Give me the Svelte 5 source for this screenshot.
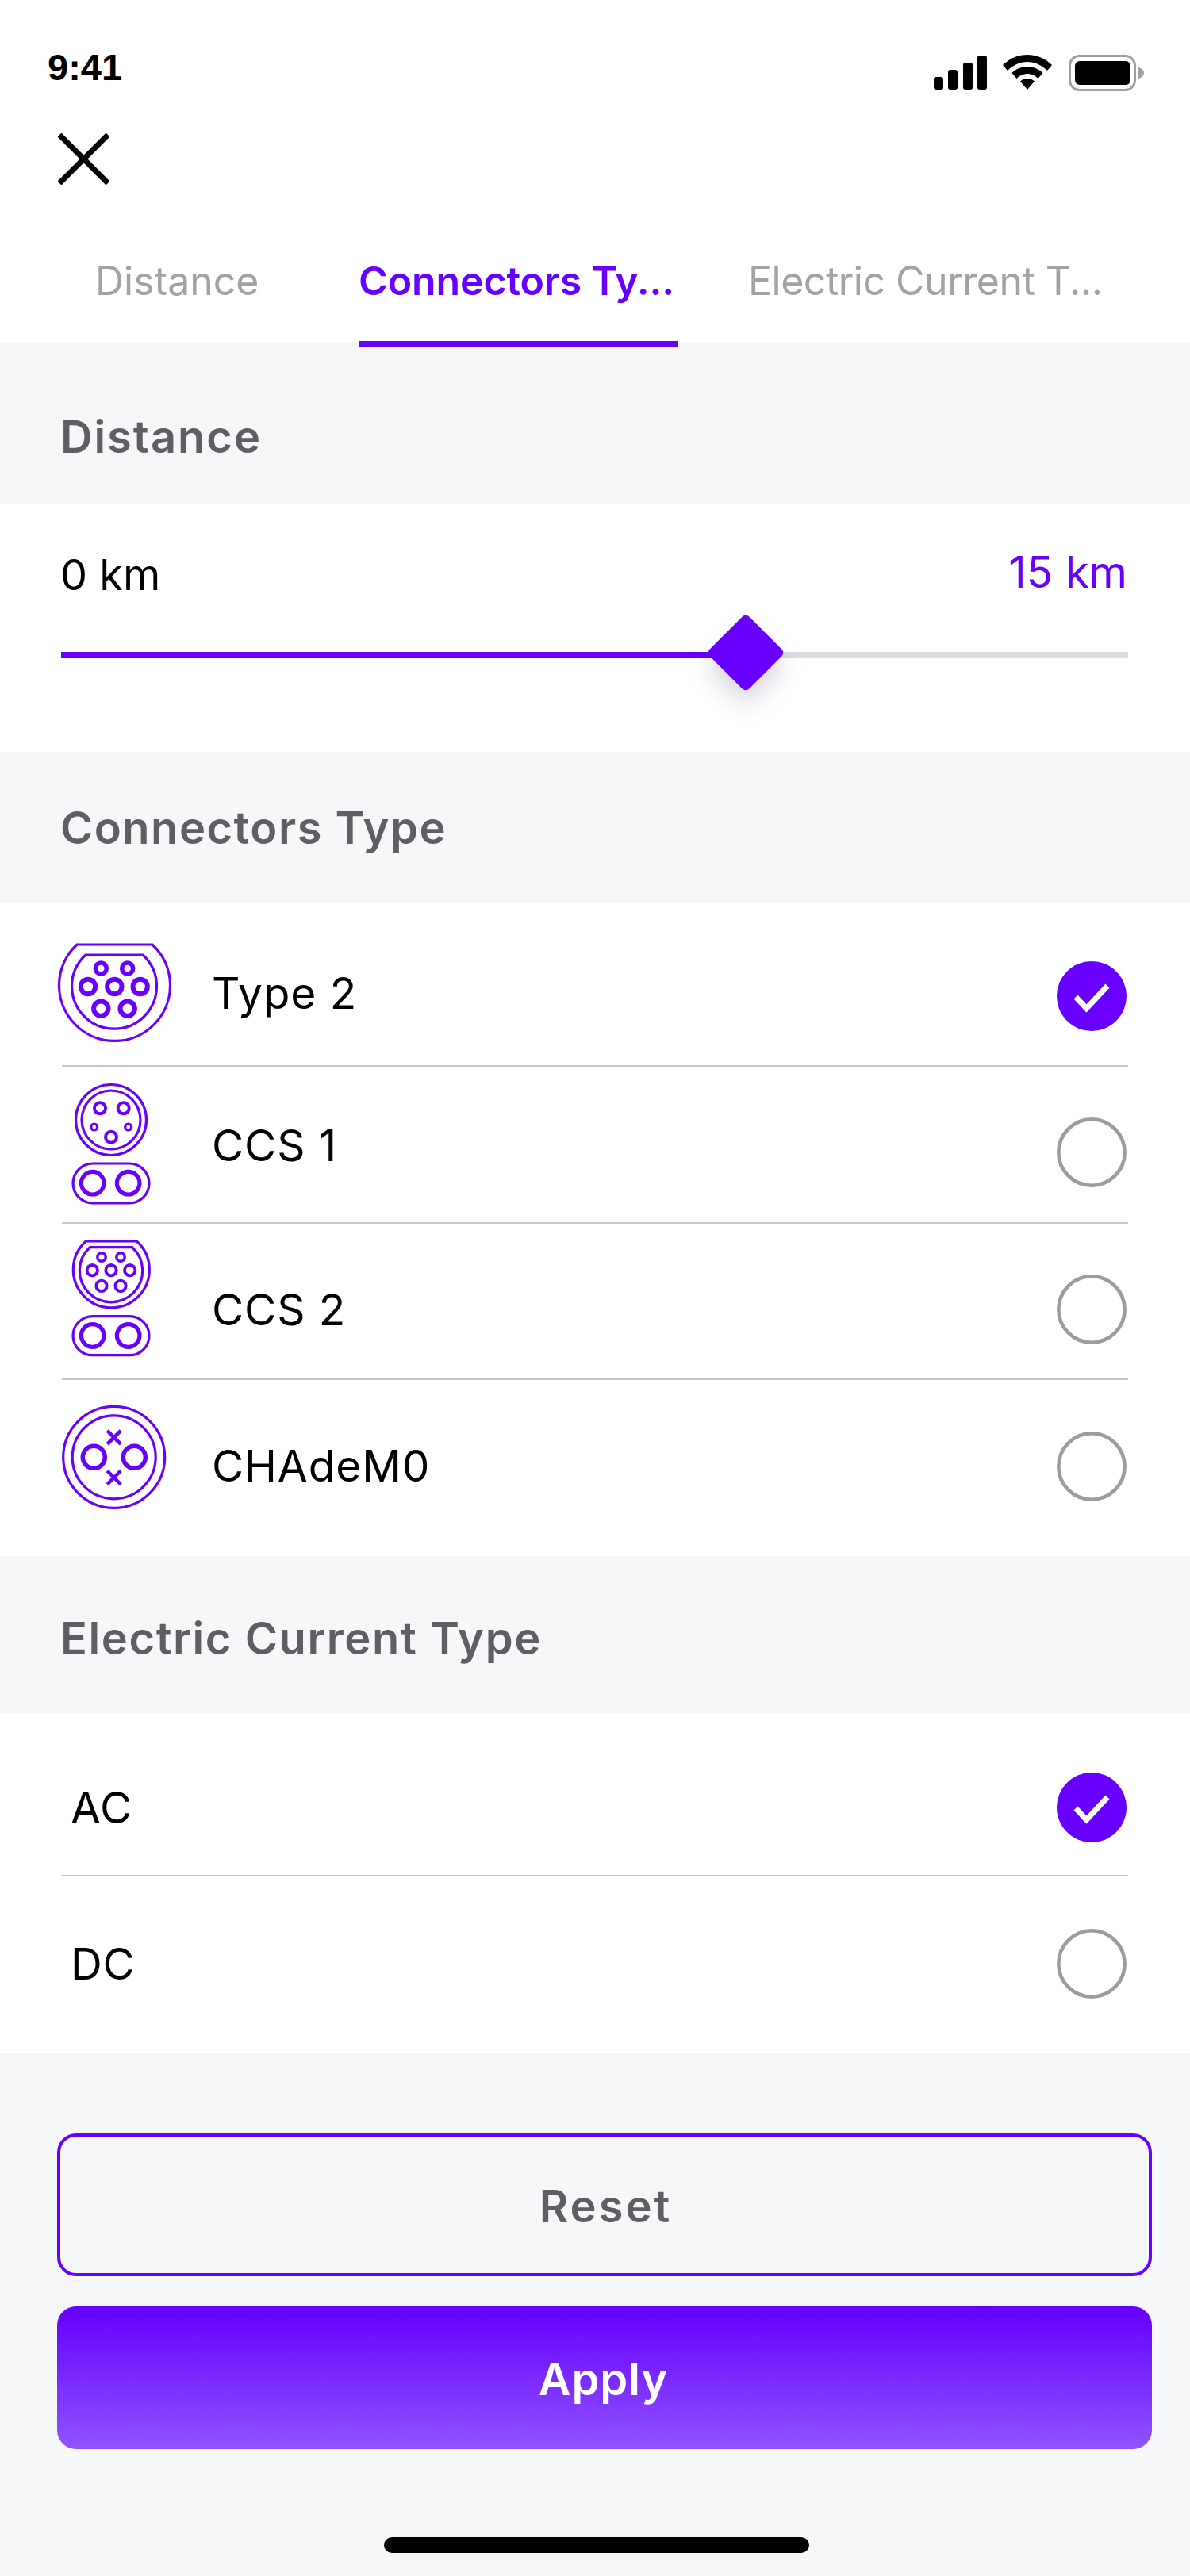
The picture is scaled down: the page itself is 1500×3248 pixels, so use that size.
<script>
  const P = '#6800ff';
</script>

{#snippet radio(on)}
  <svg class="radio" viewBox="0 0 88 88">
    {#if on}
      <circle cx="44" cy="44" r="44" fill={P} />
      <path d="M24 45 L37.500 59.500 L64 31" fill="none" stroke="#fff" stroke-width="7" />
    {:else}
      <circle cx="44" cy="44" r="41.700" fill="none" stroke="#9c9c9c" stroke-width="4.600" />
    {/if}
  </svg>
{/snippet}

<div class="page">
  <header class="top">
    <div class="status">
      <span class="time">9:41</span>
      <div class="sys">
        <svg class="signal" viewBox="0 0 67 43"><rect x="0" y="27" width="12" height="16" rx="3"/><rect x="18" y="18" width="12" height="25" rx="3"/><rect x="37" y="9" width="12" height="34" rx="3"/><rect x="55" y="0" width="12" height="43" rx="3"/></svg>
        <svg class="wifi" viewBox="0 0 62 44"><path d="M31 0C43 0 54 5 62 13L56 20C49.500 13.500 40.500 9 31 9S12.500 13.500 6 20L0 13C8 5 19 0 31 0Z"/><path d="M31 15C38.500 15 45.500 18 50.500 23L44.500 30C41 26.500 36 24 31 24S21 26.500 17.500 30L11.500 23C16.500 18 23.500 15 31 15Z"/><path d="M31 30C34.500 30 37.500 31.500 40 33.500L31 44L22 33.500C24.500 31.500 27.500 30 31 30Z"/></svg>
        <svg class="battery" viewBox="0 0 96 46"><rect x="1.500" y="1.500" width="82" height="43" rx="12" fill="none" stroke="#a0a0a0" stroke-width="3"/><rect x="8" y="8" width="70" height="30" rx="6" fill="#000"/><path d="M88 16C92 17 95 20 95 23S92 29 88 30Z" fill="#a0a0a0"/></svg>
      </div>
    </div>
    <button class="close" aria-label="Close">
      <svg viewBox="0 0 65 65"><path d="M2 2 L63 63 M63 2 L2 63" stroke="#000" stroke-width="7" fill="none"/></svg>
    </button>
    <nav class="tabs">
      <span class="tab t1">Distance</span>
      <span class="tab t2">Connectors Ty...</span>
      <span class="tab t3">Electric Current T...</span>
    </nav>
  </header>

  <h2 class="sec s1">Distance</h2>
  <section class="slider">
    <div class="vals"><span class="min">0 km</span><span class="max">15 km</span></div>
    <div class="track">
      <div class="fill"></div>
      <div class="thumb"></div>
    </div>
  </section>

  <h2 class="sec s2">Connectors Type</h2>
  <section class="list">
    <div class="row r1">
      <svg class="plug" viewBox="72 1161 150 190">
        <g fill="none" stroke={P} stroke-width="3.200">
          <path d="M97 1191H192A70 70 0 1 1 97 1191Z"/>
          <path d="M108 1204H180A53.500 53.500 0 1 1 108 1204Z"/>
          <g stroke-width="5.500"><circle cx="127.300" cy="1221" r="7"/><circle cx="160.700" cy="1221" r="7"/></g>
          <g stroke-width="6"><circle cx="111" cy="1244" r="9.200"/><circle cx="144.300" cy="1244" r="9.200"/><circle cx="176.700" cy="1244" r="9.200"/><circle cx="127.300" cy="1271.700" r="9.200"/><circle cx="160.700" cy="1271.700" r="9.200"/></g>
        </g>
      </svg>
      <span class="label l1">Type 2</span>
      {@render radio(true)}
    </div>
    <div class="row r2">
      <svg class="plug" viewBox="72 1358 150 190">
        <g fill="none" stroke={P} stroke-width="3.200">
          <circle cx="140" cy="1412" r="44.500"/>
          <circle cx="140" cy="1412" r="37"/>
          <g stroke-width="4"><circle cx="126" cy="1397.300" r="7"/><circle cx="155.700" cy="1397.300" r="7"/><circle cx="140" cy="1433.700" r="7"/></g>
          <circle cx="118.700" cy="1421" r="4"/><circle cx="161.700" cy="1421" r="4"/>
          <rect x="92" y="1467" width="96" height="50" rx="25"/>
          <g stroke-width="5.200"><circle cx="116.700" cy="1491.700" r="14.300"/><circle cx="161.700" cy="1491.700" r="14.300"/></g>
        </g>
      </svg>
      <span class="label l2">CCS 1</span>
      {@render radio(false)}
    </div>
    <div class="row r3">
      <svg class="plug" viewBox="72 1556 150 190">
        <g fill="none" stroke={P} stroke-width="3.200">
          <path d="M108.300 1565H172.300A48 48 0 1 1 108.300 1565Z"/>
          <path d="M113.300 1572.700H166.700A39.700 39.700 0 1 1 113.300 1572.700Z"/>
          <g stroke-width="3.500"><circle cx="128" cy="1585" r="5.200"/><circle cx="152" cy="1585" r="5.200"/></g>
          <g stroke-width="3.800"><circle cx="116.300" cy="1601.700" r="6.700"/><circle cx="140" cy="1601.700" r="6.700"/><circle cx="163.700" cy="1601.700" r="6.700"/><circle cx="128" cy="1621.300" r="6.700"/><circle cx="152" cy="1621.300" r="6.700"/></g>
          <rect x="92" y="1659.700" width="96" height="49" rx="24.500"/>
          <g stroke-width="5.200"><circle cx="116.700" cy="1684" r="14.300"/><circle cx="161.700" cy="1684" r="14.300"/></g>
        </g>
      </svg>
      <span class="label l3">CCS 2</span>
      {@render radio(false)}
    </div>
    <div class="row r4">
      <svg class="plug" viewBox="72 1754 150 190">
        <g fill="none" stroke={P} stroke-width="3.200">
          <circle cx="143.700" cy="1837.300" r="64"/>
          <circle cx="143.700" cy="1837.300" r="52.500"/>
          <g stroke-width="5.500"><circle cx="118.300" cy="1837.300" r="14"/><circle cx="169.300" cy="1837.300" r="14"/></g>
          <path stroke-width="4.500" d="M135.200 1803.800l17 17m0 -17l-17 17M135.200 1854.500l17 17m0 -17l-17 17"/>
        </g>
      </svg>
      <span class="label l4">CHAdeM0</span>
      {@render radio(false)}
    </div>
  </section>

  <h2 class="sec s3">Electric Current Type</h2>
  <section class="list">
    <div class="row cur c1">
      <span class="label">AC</span>
      {@render radio(true)}
    </div>
    <div class="row cur c2">
      <span class="label">DC</span>
      {@render radio(false)}
    </div>
  </section>

  <div class="actions">
    <button class="btn reset">Reset</button>
    <button class="btn apply">Apply</button>
  </div>
  <div class="home"></div>
</div>

<style>
  :global(body) { margin: 0; }
  .page {
    width: 1500px;
    height: 3248px;
    background: #f6f7f9;
    font-family: Inter, "Noto Sans", sans-serif;
    color: #000;
    overflow: hidden;
    display: flex;
    flex-direction: column;
  }
  .top { background: #fff; height: 432px; box-sizing: border-box; display: flex; flex-direction: column; }
  .status { height: 168px; box-sizing: border-box; display: flex; justify-content: space-between; padding: 59px 57px 0 60px; }
  .time { font: 700 47px/52px "Liberation Sans", sans-serif; }
  .sys { display: flex; align-items: flex-start; padding-top: 10px; }
  .signal { width: 67px; height: 43px; margin-top: 1px; margin-right: 20px; }
  .wifi { width: 62px; height: 44px; margin-right: 21px; }
  .battery { width: 96px; height: 46px; }
  .close { all: unset; display: block; width: 65px; height: 65px; margin-left: 73px; }
  .close svg { display: block; width: 65px; height: 65px; }
  .tabs { display: flex; padding-left: 120px; height: 199px; box-sizing: border-box; }
  .tab { font-size: 50px; font-weight: 400; color: #a2a2a6; padding-top: 87px; line-height: 68px; white-space: nowrap; box-sizing: border-box; height: 205px; }
  .t1 { width: 332px; }
  .t2 { width: 402px; color: #6800ff; font-weight: 600; border-bottom: 8px solid #6800ff; letter-spacing: -0.1px; }
  .t3 { margin-left: 89px; letter-spacing: -0.5px; }

  .sec { margin: 0; font-size: 56px; font-weight: 600; color: #5f5f63; box-sizing: border-box; padding-left: 76px; display: flex; align-items: center; letter-spacing: 1.500px; }
  .s1 { height: 204px; padding-top: 34px; letter-spacing: 2px; }
  .s2 { height: 191px; }
  .s3 { height: 198px; padding-top: 10px; letter-spacing: 1.600px; }

  .slider { background: #fff; height: 312px; box-sizing: border-box; padding: 50px 78px 0 77px; }
  .vals { display: flex; justify-content: space-between; font-size: 56px; line-height: 70px; height: 130px; }
  .min { margin-top: 4px; margin-left: -1px; font-size: 54px; }
  .max { color: #6800ff; margin-right: 1px; font-size: 55px; }
  .track { height: 8px; background: #dcdae2; position: relative; margin-top: 6px; }
  .fill { height: 8px; width: 820px; background: #6800ff; }
  .thumb {
    position: absolute;
    left: 819px;
    top: -43px;
    width: 88px;
    height: 88px;
    background: #6800ff;
    border-radius: 8px;
    transform: rotate(45deg) scale(0.8);
    box-shadow: 16px 16px 36px rgba(50, 40, 90, 0.18);
  }

  .list { background: #fff; }
  .row { display: flex; align-items: center; box-sizing: border-box; margin: 0 78px; }
  .r1, .r2, .r3, .c1 { border-bottom: 2px solid #c6c6c8; }
  .plug { width: 150px; height: 190px; flex: none; margin: 0 45px 0 -6px; overflow: visible; }
  .r1 { height: 206px; padding-top: 30px; }
  .r2 { height: 198px; padding-top: 20px; }
  .r3 { height: 197px; padding-top: 21px; }
  .r4 { height: 222px; padding-bottom: 4px; }
  .label { flex: 1; font-size: 55px; line-height: 70px; letter-spacing: 0.900px; }
  .l1 { margin-top: -8px; }
  .l2 { margin-top: -18px; }
  .l4 { margin-top: -2px; }
  .radio { width: 88px; height: 88px; flex: none; margin-right: 2px; }
  .cur { padding-left: 11px; }
  .c1 { height: 206px; padding-top: 34px; }
  .c2 { height: 222px; padding-bottom: 2px; }

  .actions { display: flex; flex-direction: column; gap: 38px; margin: 102px 48px 0 72px; }
  .btn { all: unset; box-sizing: border-box; height: 180px; text-align: center; font-family: Inter, sans-serif; font-size: 56px; font-weight: 600; border-radius: 24px; letter-spacing: 1px; }
  .reset { border: 4px solid #6800ff; color: #5f5f63; letter-spacing: 3px; padding-top: 4px; padding-left: 3px; }
  .apply { background: linear-gradient(#6400ff, #9053ff); color: #fff; padding-top: 4px; padding-right: 3px; }
  .home { width: 536px; height: 20px; background: #000; border-radius: 10px; margin: 111px 0 0 484px; flex: none; }
</style>
